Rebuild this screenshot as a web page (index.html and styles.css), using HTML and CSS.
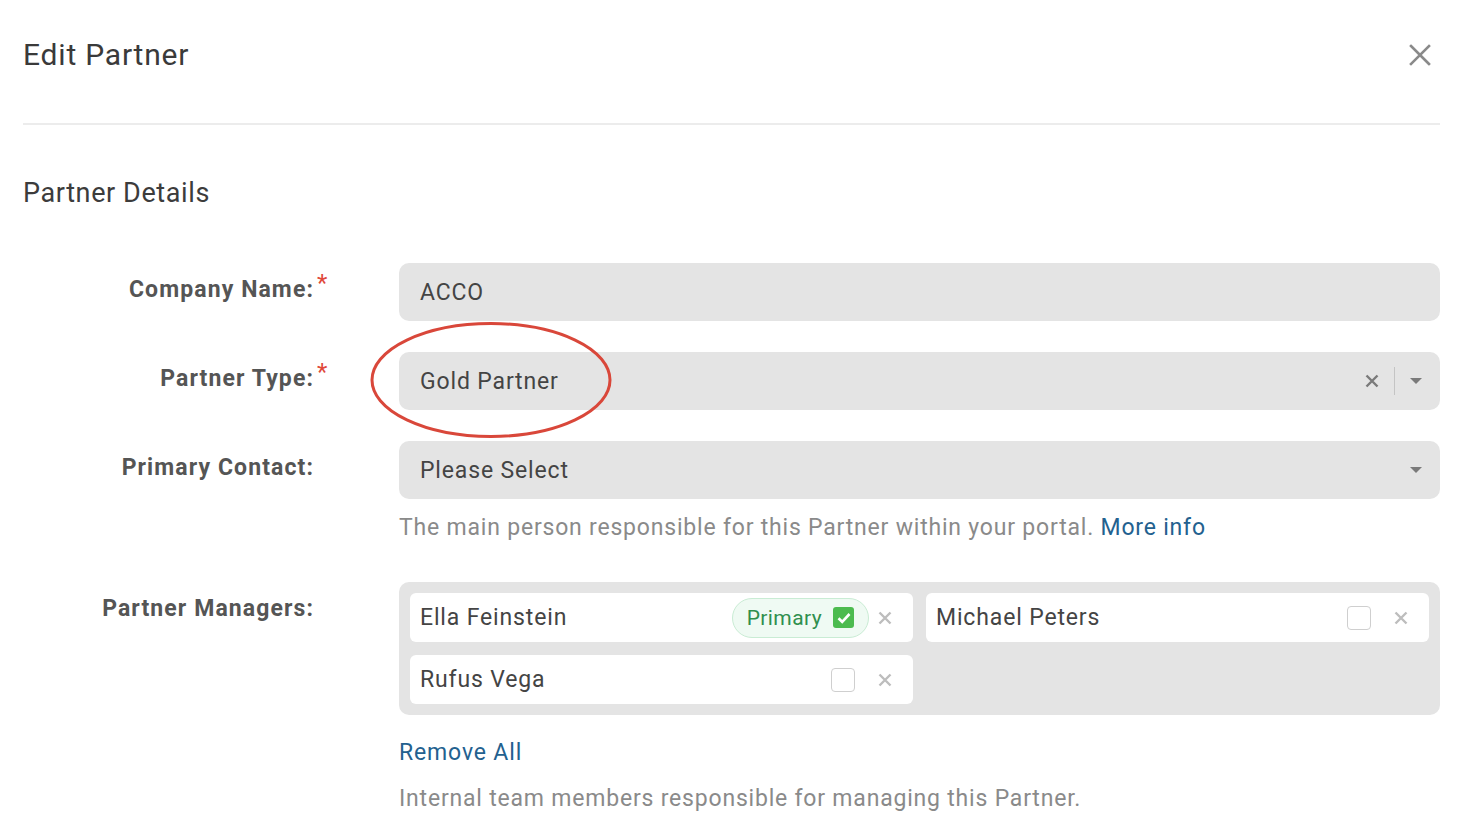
FILE: index.html
```html
<!DOCTYPE html>
<html lang="en">
<head>
<meta charset="utf-8">
<title>Edit Partner</title>
<link rel="stylesheet" href="styles.css">
</head>
<body>
<div class="modal">
  <header class="modal-header">
    <h1 class="modal-title">Edit Partner</h1>
    <button class="close-btn" aria-label="Close">
      <svg width="22" height="22" viewBox="0 0 22 22"><path d="M2 2 L20 20 M20 2 L2 20" stroke="#8a8a8a" stroke-width="2.6" stroke-linecap="square"/></svg>
    </button>
  </header>

  <h2 class="section-title">Partner Details</h2>

  <div class="form">
    <div class="row">
      <div class="label">Company Name:</div>
      <div class="req">*</div>
      <div class="field">
        <div class="input">ACCO</div>
      </div>
    </div>

    <div class="row">
      <div class="label">Partner Type:</div>
      <div class="req">*</div>
      <div class="field annotated">
        <div class="input select">
          <span class="value">Gold Partner</span>
          <span class="clear">
            <svg width="14" height="14" viewBox="0 0 14 14"><path d="M1.5 1.5 L12.5 12.5 M12.5 1.5 L1.5 12.5" stroke="#7a7a7a" stroke-width="2.4"/></svg>
          </span>
          <span class="sep"></span>
          <span class="caret"></span>
        </div>
        <svg class="ellipse" width="250" height="120" viewBox="0 0 250 120"><ellipse cx="125" cy="60" rx="119" ry="56.5" fill="none" stroke="#d9473a" stroke-width="3"/></svg>
      </div>
    </div>

    <div class="row">
      <div class="label">Primary Contact:</div>
      <div class="req"></div>
      <div class="field">
        <div class="input select">
          <span class="value">Please Select</span>
          <span class="caret"></span>
        </div>
        <p class="help">The main person responsible for this Partner within your portal. <a class="link" href="#">More info</a></p>
      </div>
    </div>

    <div class="row managers-row">
      <div class="label">Partner Managers:</div>
      <div class="req"></div>
      <div class="field">
        <div class="managers">
          <div class="chip">
            <span class="chip-name">Ella Feinstein</span>
            <span class="badge">Primary
              <span class="check-on"><svg width="14" height="12" viewBox="0 0 14 12"><path d="M1.5 6.2 L5.2 9.8 L12.5 2" fill="none" stroke="#fff" stroke-width="2.6"/></svg></span>
            </span>
            <span class="chip-x"><svg width="14" height="14" viewBox="0 0 14 14"><path d="M1.5 1.5 L12.5 12.5 M12.5 1.5 L1.5 12.5" stroke="#bdbdbd" stroke-width="2.4"/></svg></span>
          </div>
          <div class="chip">
            <span class="chip-name">Michael Peters</span>
            <span class="check-off"></span>
            <span class="chip-x"><svg width="14" height="14" viewBox="0 0 14 14"><path d="M1.5 1.5 L12.5 12.5 M12.5 1.5 L1.5 12.5" stroke="#bdbdbd" stroke-width="2.4"/></svg></span>
          </div>
          <div class="chip">
            <span class="chip-name">Rufus Vega</span>
            <span class="check-off"></span>
            <span class="chip-x"><svg width="14" height="14" viewBox="0 0 14 14"><path d="M1.5 1.5 L12.5 12.5 M12.5 1.5 L1.5 12.5" stroke="#bdbdbd" stroke-width="2.4"/></svg></span>
          </div>
        </div>
        <a class="link remove-all" href="#">Remove All</a>
        <p class="help help-bottom">Internal team members responsible for managing this Partner.</p>
      </div>
    </div>
  </div>
</div>
</body>
</html>
```

FILE: styles.css
```css
* { box-sizing: border-box; }

html, body {
  margin: 0;
  padding: 0;
  background: #ffffff;
}

body {
  font-family: Roboto, "Liberation Sans", Arial, sans-serif;
  color: #444444;
  overflow: hidden;
  letter-spacing: 0.85px;
}

.modal {
  padding: 0 31px 0 23px;
}

.modal-header {
  display: flex;
  align-items: center;
  justify-content: space-between;
  padding: 30px 0 43px;
  border-bottom: 2px solid #ececec;
}

.modal-title {
  margin: 0;
  font-size: 30px;
  line-height: 50px;
  font-weight: 400;
  color: #3a3a3a;
  letter-spacing: 0.8px;
}

.close-btn {
  border: none;
  background: none;
  padding: 0;
  margin-right: 9px;
  width: 22px;
  height: 22px;
  cursor: pointer;
  display: flex;
}

.section-title {
  margin: 51px 0 0;
  font-size: 27px;
  line-height: 34px;
  font-weight: 400;
  color: #3c3c3c;
  letter-spacing: 0.6px;
}

.form {
  margin-top: 53px;
  display: flex;
  flex-direction: column;
  gap: 31px;
}

.row {
  display: grid;
  grid-template-columns: 291px 85px 1fr;
  align-items: start;
}

.label {
  text-align: right;
  font-weight: 700;
  font-size: 23px;
  line-height: 54px;
  color: #555555;
  letter-spacing: 1.1px;
}

.req {
  color: #e0483a;
  font-size: 24px;
  line-height: 24px;
  padding-left: 3px;
  padding-top: 8px;
}

.field {
  position: relative;
}

.input {
  height: 58px;
  border-radius: 10px;
  background: #e4e4e4;
  display: flex;
  align-items: center;
  padding: 0 16px 0 21px;
  font-size: 23px;
  color: #444444;
}

.select .value {
  flex: 1;
}

.clear {
  display: flex;
  margin-right: 15px;
}

.sep {
  width: 1px;
  height: 28px;
  background: #c4c4c4;
  margin-right: 15px;
}

.caret {
  width: 0;
  height: 0;
  border-left: 6px solid transparent;
  border-right: 6px solid transparent;
  border-top: 6px solid #7a7a7a;
  margin-right: 2px;
}

.ellipse {
  position: absolute;
  left: -33px;
  top: -32px;
  pointer-events: none;
}

.help {
  margin: 14px 0 0;
  font-size: 23px;
  line-height: 30px;
  color: #8a8a8a;
  letter-spacing: 0.8px;
}

.link {
  color: #23618f;
  text-decoration: none;
}

.managers-row {
  margin-top: 8px;
}

.managers-row .label {
  line-height: 30px;
  padding-top: 12px;
}

.managers {
  background: #e4e4e4;
  border-radius: 10px;
  padding: 11px;
  display: grid;
  grid-template-columns: 1fr 1fr;
  gap: 13px;
}

.chip {
  background: #ffffff;
  border-radius: 6px;
  height: 49px;
  display: flex;
  align-items: center;
  padding: 0 21px 0 10px;
  font-size: 23px;
  color: #444444;
}

.chip-name {
  flex: 1;
}

.badge {
  display: flex;
  align-items: center;
  height: 40px;
  padding: 0 14px 0 14px;
  border: 1.5px solid #c9ecd4;
  background: #effaf3;
  border-radius: 20px;
  color: #2f8f4e;
  font-size: 21px;
  letter-spacing: 0.4px;
  margin-right: 9px;
}

.check-on {
  width: 21px;
  height: 21px;
  border-radius: 3px;
  background: #4cbb4f;
  margin-left: 11px;
  display: flex;
  align-items: center;
  justify-content: center;
}

.check-off {
  width: 24px;
  height: 24px;
  border: 1.5px solid #cfcfcf;
  border-radius: 4px;
  margin-right: 23px;
}

.chip-x {
  display: flex;
}

.remove-all {
  display: block;
  margin-top: 23px;
  font-size: 23px;
  line-height: 30px;
}

.help-bottom {
  margin-top: 16px;
}
```
